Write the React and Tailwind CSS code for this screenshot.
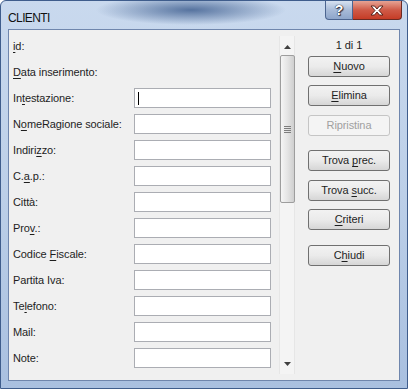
import React from "react";

const font = { fontFamily: '"Liberation Sans", Arial, sans-serif' };

const rows = [
  { pre: "", key: "i", post: "d:", input: false },
  { pre: "", key: "D", post: "ata inserimento:", input: false },
  { pre: "In", key: "t", post: "estazione:", input: true, caret: true },
  { pre: "N", key: "o", post: "meRagione sociale:", input: true },
  { pre: "Indiri", key: "z", post: "zo:", input: true },
  { pre: "C.", key: "a", post: ".p.:", input: true },
  { pre: "Città:", key: "", post: "", input: true },
  { pre: "Pro", key: "v", post: ".:", input: true },
  { pre: "Codice ", key: "F", post: "iscale:", input: true },
  { pre: "Partita Iva:", key: "", post: "", input: true },
  { pre: "Te", key: "l", post: "efono:", input: true },
  { pre: "Mail:", key: "", post: "", input: true },
  { pre: "Note:", key: "", post: "", input: true },
];

const buttons = [
  { pre: "", key: "N", post: "uovo", mt: "mt-[4px]" },
  { pre: "", key: "E", post: "limina", mt: "mt-[8px]" },
  { pre: "Ripristina", key: "", post: "", mt: "mt-[9px]", disabled: true },
  { pre: "Trova ", key: "p", post: "rec.", mt: "mt-[14px]" },
  { pre: "Trova ", key: "s", post: "ucc.", mt: "mt-[9px]" },
  { pre: "", key: "C", post: "riteri", mt: "mt-[8px]" },
  { pre: "C", key: "h", post: "iudi", mt: "mt-[15px]" },
];

function Label({ pre, k, post }) {
  return (
    <span>
      {pre}
      {k && <span className="underline underline-offset-[1.5px]">{k}</span>}
      {post}
    </span>
  );
}

export default function App() {
  return (
    <div
      className="w-[408px] h-[389px] relative overflow-hidden rounded-t-[6px] border border-[#3f5d8c] bg-gradient-to-b from-[#c9d9ee] via-[#bccfe8] to-[#a9c0e0] text-[11px] text-[#1e1e1e] tracking-[-0.1px]"
      style={font}
    >
      {/* title bar */}
      <div className="h-[28px] flex items-start relative bg-[radial-gradient(ellipse_95px_15px_at_190px_9px,#56739f,transparent)]">
        <div className="pl-[7px] pt-[8px] text-[12px] text-[#111] tracking-[-0.6px]">CLIENTI</div>
        <div className="ml-auto mr-[5px] flex">
          <div className="w-[28px] h-[19px] rounded-bl-[4px] border border-t-0 border-[#4c6590] bg-gradient-to-b from-[#d6e1f0] via-[#a8bbd8] to-[#8ea6cb] flex items-center justify-center">
            <span className="text-white font-bold text-[14px] leading-none [text-shadow:0_0_1px_#223,0_0_1px_#223,1px_1px_1px_#334]">?</span>
          </div>
          <div className="w-[49px] h-[19px] rounded-br-[4px] border border-t-0 border-l-0 border-[#6b2a22] bg-gradient-to-b from-[#e6a394] via-[#cf5a47] to-[#c53b25] flex items-center justify-center">
            <svg width="14" height="11" viewBox="0 0 14 11">
              <path
                d="M1 1 H4.5 L7 4 L9.5 1 H13 L9 5.5 L13 10 H9.5 L7 7 L4.5 10 H1 L5 5.5 Z"
                fill="#fff"
                stroke="#4a1a12"
                strokeWidth="0.9"
                strokeLinejoin="round"
              />
            </svg>
          </div>
        </div>
      </div>

      {/* client area */}
      <div className="mx-[7px] h-[352px] border border-[#6f86ad] bg-[#f0f0f0] flex">
        {/* form */}
        <div className="w-[266px] pl-[4px] pt-[3px] flex flex-col">
          {rows.map((r, i) => (
            <div key={i} className="h-[26px] flex items-center">
              <div className="w-[121px]">
                <Label pre={r.pre} k={r.key} post={r.post} />
              </div>
              {r.input && (
                <div className="w-[137px] h-[20px] border border-[#abadb3] bg-white flex items-center pl-[3px]">
                  {r.caret && <div className="w-[1px] h-[13px] bg-black" />}
                </div>
              )}
            </div>
          ))}
        </div>

        {/* scrollbar */}
        <div className="ml-[4px] mt-[6px] w-[16px] h-[338px] flex flex-col items-center bg-[#f4f4f4] border-x border-[#e6e6e6]">
          <div className="h-[19px] w-full flex items-center justify-center pt-[2px]">
            <svg width="7" height="4" viewBox="0 0 7 4">
              <path d="M0 4 L3.5 0 L7 4 Z" fill="#404040" />
            </svg>
          </div>
          <div className="w-[15px] h-[148px] rounded-[2px] border border-[#9d9d9d] bg-gradient-to-r from-[#f5f5f5] via-[#e4e4e4] to-[#cfcfcf] flex items-center justify-center">
            <svg width="7" height="7" viewBox="0 0 7 7">
              <path d="M0 0.5 H7 M0 2.5 H7 M0 4.5 H7 M0 6.5 H7" stroke="#7d7d7d" strokeWidth="1" />
            </svg>
          </div>
          <div className="mt-auto h-[17px] w-full flex items-center justify-center pb-[3px]">
            <svg width="7" height="4" viewBox="0 0 7 4">
              <path d="M0 0 L7 0 L3.5 4 Z" fill="#404040" />
            </svg>
          </div>
        </div>

        {/* right panel */}
        <div className="flex-1 pl-[13px] pt-[8px] flex flex-col">
          <div className="w-[82px] h-[14px] text-center leading-[14px]">1 di 1</div>
          {buttons.map((b, i) => (
            <div
              key={i}
              className={`${b.mt} w-[82px] h-[21px] rounded-[3px] border flex items-center justify-center ${
                b.disabled
                  ? "border-[#c5c5c5] bg-[#f4f4f4] text-[#a0a0a0]"
                  : "border-[#707070] bg-gradient-to-b from-[#f2f2f2] via-[#ebebeb] to-[#d6d6d6] text-[#1e1e1e]"
              }`}
            >
              <Label pre={b.pre} k={b.key} post={b.post} />
            </div>
          ))}
        </div>
      </div>
    </div>
  );
}
